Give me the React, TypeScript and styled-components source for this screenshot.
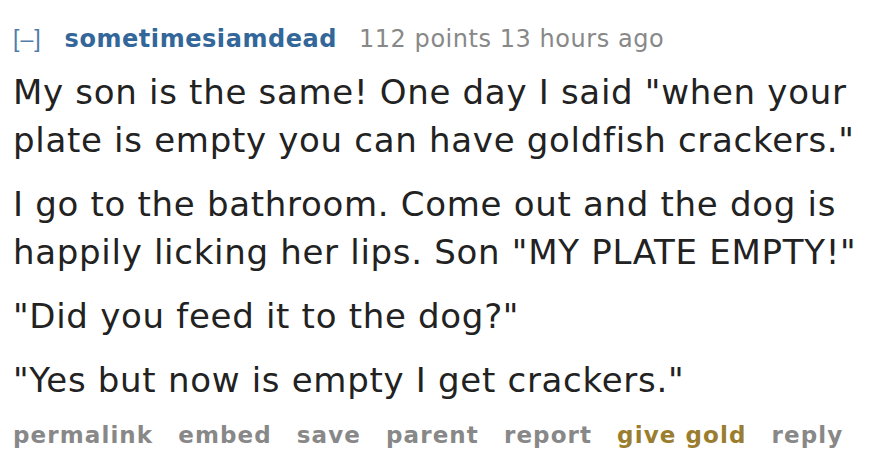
import { FC } from 'react';
import styled, { createGlobalStyle } from 'styled-components';

const GlobalStyle = createGlobalStyle`
  html, body {
    margin: 0;
    padding: 0;
    background: #ffffff;
  }
  body {
    font-family: 'DejaVu Sans', Verdana, sans-serif;
  }
`;

const Comment = styled.div`
  width: 878px;
  height: 466px;
  box-sizing: border-box;
  padding: 24px 13px 0;
  overflow: hidden;
`;

const Tagline = styled.div`
  display: flex;
  align-items: baseline;
  font-size: 24px;
  line-height: 30px;
  letter-spacing: 0.55px;
  color: #888888;
  white-space: nowrap;
`;

const Expand = styled.span`
  font-family: 'Liberation Sans', Arial, sans-serif;
  color: #336699;
  opacity: 0.85;
  font-size: 23px;
  letter-spacing: 1px;
  margin-right: 23px;
`;

const Author = styled.a`
  color: #336699;
  font-weight: bold;
  text-decoration: none;
  letter-spacing: 0.55px;
  margin-right: 22px;
`;

const Body = styled.div`
  margin-top: 14px;
  color: #222222;
  font-size: 34px;
  line-height: 48px;
  letter-spacing: 0.7px;
`;

const Para = styled.p`
  margin: 0 0 16px;
  white-space: nowrap;
`;

const Buttons = styled.ul`
  display: flex;
  gap: 25px;
  list-style: none;
  margin: 2px 0 0;
  padding: 0;
  font-size: 23px;
  line-height: 30px;
  letter-spacing: 1.1px;
  font-weight: bold;
`;

const Button = styled.li<{ $gold?: boolean }>`
  color: ${p => (p.$gold ? '#9a7d2e' : '#888888')};
`;

const buttons = ['permalink', 'embed', 'save', 'parent', 'report', 'give gold', 'reply'];

const App: FC = () => (
  <>
    <GlobalStyle />
    <Comment>
      <Tagline>
        <Expand>[–]</Expand>
        <Author href='#'>sometimesiamdead</Author>
        <span>112 points 13 hours ago</span>
      </Tagline>
      <Body>
        <Para>
          My son is the same! One day I said "when your
          <br />
          plate is empty you can have goldfish crackers."
        </Para>
        <Para>
          I go to the bathroom. Come out and the dog is
          <br />
          happily licking her lips. Son "MY PLATE EMPTY!"
        </Para>
        <Para>"Did you feed it to the dog?"</Para>
        <Para>"Yes but now is empty I get crackers."</Para>
      </Body>
      <Buttons>
        {buttons.map(b => (
          <Button key={b} $gold={b === 'give gold'}>
            {b}
          </Button>
        ))}
      </Buttons>
    </Comment>
  </>
);

export default App;
